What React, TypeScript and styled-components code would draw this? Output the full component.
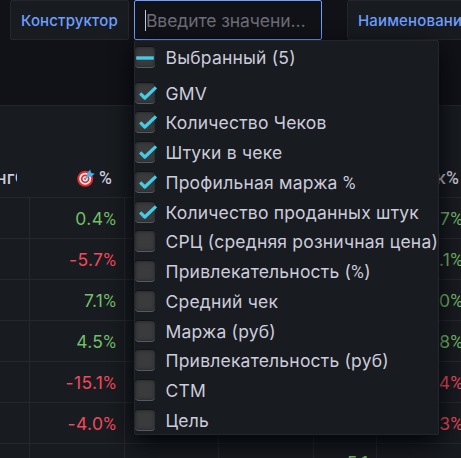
import React from "react";
import styled, { createGlobalStyle } from "styled-components";

const GlobalStyle = createGlobalStyle`
  * { box-sizing: border-box; }
  body {
    margin: 0;
    background: #111217;
    color: #ccccdc;
    font-family: Inter, "Liberation Sans", sans-serif;
    overflow: hidden;
  }
`;

const Page = styled.main`
  position: relative;
  width: 461px;
  height: 458px;
  overflow: hidden;
  background: #111217;
`;

const Toolbar = styled.header`
  display: flex;
  height: 105px;
  padding-left: 10px;
  align-items: flex-start;
`;

const VariableLabel = styled.label<{ $width: number }>`
  flex: none;
  width: ${(p) => p.$width}px;
  height: 40px;
  padding-left: 10px;
  border: 1px solid #24262b;
  border-radius: 2px;
  background: #181b1f;
  color: #6e9fff;
  font-size: 15px;
  font-weight: 500;
  line-height: 40px;
  letter-spacing: 0.16px;
  white-space: nowrap;
`;

const VariableInput = styled.div`
  display: flex;
  flex: none;
  align-items: center;
  width: 188px;
  height: 40px;
  margin: 0 25px 0 5px;
  padding-left: 10px;
  border: 1px solid #6e9fff;
  border-radius: 2px;
  background: #111217;
  color: #6c6d76;
  font-size: 17.5px;
  letter-spacing: -0.08px;
  white-space: nowrap;
`;

const Caret = styled.span`
  width: 1px;
  height: 21px;
  background: #ccccdc;
`;

const Panel = styled.section`
  width: 520px;
  height: 353px;
  border-top: 1px solid #24262b;
  background: #181b1f;
`;

const TableRow = styled.div<{ $head?: boolean }>`
  display: grid;
  grid-template-columns: 30px 95px 94px 95px 63px 95px;
  height: ${(p) => (p.$head ? 92 : 41)}px;
  border-bottom: 1px solid #26282d;
`;

const Cell = styled.div<{ $tone?: string; $raised?: boolean }>`
  display: flex;
  align-items: center;
  justify-content: flex-end;
  padding-right: 7.5px;
  padding-bottom: ${(p) => (p.$raised ? 3 : 0)}px;
  border-right: 1px solid #26282d;
  overflow: hidden;
  color: ${(p) => (p.$tone === "up" ? "#73bf69" : "#f2495c")};
  font-size: 17.5px;
  letter-spacing: 0.35px;
  white-space: nowrap;
`;

const HeadCell = styled.div<{ $clipped?: boolean }>`
  display: flex;
  align-items: center;
  justify-content: ${(p) => (p.$clipped ? "flex-start" : "flex-end")};
  align-self: end;
  width: ${(p) => (p.$clipped ? "17px" : "auto")};
  height: 39px;
  padding-right: ${(p) => (p.$clipped ? 0 : 13)}px;
  overflow: hidden;
  font-size: 17.5px;
  font-weight: 500;
  letter-spacing: 0.19px;
  white-space: nowrap;
`;

const ClippedTitle = styled.span`
  margin-left: -4px;
`;

const PercentSign = styled.span`
  font-family: Roboto, sans-serif;
`;

const TargetSvg = styled.svg`
  flex: none;
  margin-right: 4px;
`;

const Menu = styled.div`
  position: absolute;
  left: 134px;
  top: 40px;
  width: 305px;
  height: 395px;
  padding-top: 2px;
  border: 1px solid #24262b;
  border-radius: 2px;
  background: #181b1f;
  box-shadow: 0 8px 24px rgb(1, 4, 9);
`;

const Option = styled.div<{ $summary?: boolean }>`
  display: flex;
  align-items: center;
  height: 29.75px;
  margin-bottom: ${(p) => (p.$summary ? 5.4 : 0)}px;
  font-size: 17.5px;
  letter-spacing: 0.2px;
  white-space: pre;
`;

const CheckBox = styled.span`
  position: relative;
  flex: none;
  width: 20px;
  height: 21px;
  margin-right: 10.5px;
  border-radius: 4px;
  background: #3a3b3d;
  border-bottom: 1px solid #56595d;
  box-shadow: inset 0 0 3px 1px #292c30, 0 -1px 0 #111317;
`;

const Mark = styled.svg`
  position: absolute;
  left: 0;
  top: 0;
  overflow: visible;
`;

type CheckState = "on" | "off" | "mixed";

function Check({ state }: { state: CheckState }) {
  return (
    <CheckBox>
      {state !== "off" && (
        <Mark width="22" height="21" viewBox="0 0 22 21" fill="none" stroke="#45cbe5">
          {state === "mixed" ? (
            <path d="M1.2 11H18.8" strokeWidth="3.4" />
          ) : (
            <path d="M5.2 10.4L9.8 15L21 4.4" strokeWidth="3.2" strokeLinejoin="round" />
          )}
        </Mark>
      )}
    </CheckBox>
  );
}

function Target() {
  return (
    <TargetSvg width="18" height="18" viewBox="0 0 18 18" fill="none">
      <circle cx="8.2" cy="9.8" r="8" fill="#e6292f" />
      <circle cx="8.2" cy="9.8" r="6" fill="#f7f1f2" />
      <circle cx="8.2" cy="9.8" r="4.3" fill="#e6292f" />
      <circle cx="8.2" cy="9.8" r="2.6" fill="#f7f1f2" />
      <circle cx="8.2" cy="9.8" r="1.1" fill="#e6292f" />
      <path d="M8.2 9.8L14 4" stroke="#4db5ef" strokeWidth="1.6" />
      <path d="M9.6 7.8L10.4 4L13.2 .6L14 3.8L17.7 4.7L14 7.7Z" fill="#4aaeea" />
    </TargetSvg>
  );
}

function Label({ text }: { text: string }) {
  const [before, after] = text.split("%");
  if (after === undefined) return <span>{text}</span>;
  return (
    <span>
      {before}
      <PercentSign>%</PercentSign>
      {after}
    </span>
  );
}

const options: [string, CheckState][] = [
  ["GMV", "on"],
  ["Количество Чеков", "on"],
  ["Штуки в чеке", "on"],
  ["Профильная маржа %", "on"],
  ["Количество проданных штук", "on"],
  ["СРЦ (средняя розничная цена)", "off"],
  ["Привлекательность (%)", "off"],
  ["Средний чек", "off"],
  ["Маржа (руб)", "off"],
  ["Привлекательность (руб)", "off"],
  ["СТМ", "off"],
  ["Цель", "off"],
];

const rows = [
  { plan: "0.4%", share: "0.7%" },
  { plan: "-5.7%", share: "3.1%" },
  { plan: "7.1%", share: "2.0%" },
  { plan: "4.5%", share: "1.8%" },
  { plan: "-15.1%", share: "-1.4%" },
  { plan: "-4.0%", share: "-2.3%" },
];

const toneOf = (value: string) => (value.startsWith("-") ? "down" : "up");

export default function App() {
  return (
    <Page>
      <GlobalStyle />
      <Toolbar>
        <VariableLabel $width={119}>Конструктор</VariableLabel>
        <VariableInput>
          <Caret />
          Введите значени…
        </VariableInput>
        <VariableLabel $width={150}>Наименование</VariableLabel>
      </Toolbar>
      <Panel>
        <TableRow $head>
          <HeadCell $clipped>
            <ClippedTitle>нгС</ClippedTitle>
          </HeadCell>
          <HeadCell>
            <Target />
            <Label text="%" />
          </HeadCell>
          <HeadCell />
          <HeadCell />
          <HeadCell />
          <HeadCell>
            <Label text="Чек%" />
          </HeadCell>
        </TableRow>
        {rows.map((row) => (
          <TableRow key={row.plan}>
            <Cell />
            <Cell $tone={toneOf(row.plan)}>
              <Label text={row.plan} />
            </Cell>
            <Cell />
            <Cell />
            <Cell />
            <Cell $tone={toneOf(row.share)}>
              <Label text={row.share} />
            </Cell>
          </TableRow>
        ))}
        <TableRow>
          <Cell />
          <Cell $tone="down">
            <Label text="-3.6%" />
          </Cell>
          <Cell />
          <Cell />
          <Cell $tone="up" $raised>
            +5.1
          </Cell>
          <Cell />
        </TableRow>
      </Panel>
      <Menu>
        <Option $summary>
          <Check state="mixed" />
          Выбранный (5)
        </Option>
        {options.map(([label, state]) => (
          <Option key={label}>
            <Check state={state} />
            <Label text={label} />
          </Option>
        ))}
      </Menu>
    </Page>
  );
}
